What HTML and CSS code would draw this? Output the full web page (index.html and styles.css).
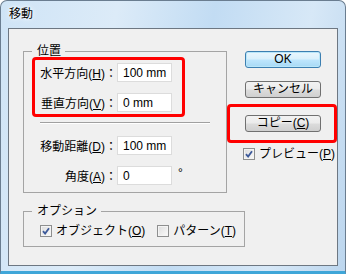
FILE: index.html
```html
<!DOCTYPE html>
<html lang="ja">
<head>
  <meta charset="UTF-8" />
  <title>移動</title>
  <link rel="stylesheet" href="styles.css">
</head>
<body>
  <div class="window">
    <div class="titlebar">移動</div>

    <div class="client">
      <div class="left">
        <fieldset class="group position">
          <legend>位置</legend>
          <div class="mark mark-fields">
            <div class="row">
              <label for="h">水平方向(<u>H</u>)：</label>
              <input id="h" class="field" type="text" value="100 mm">
            </div>
            <div class="row">
              <label for="v">垂直方向(<u>V</u>)：</label>
              <input id="v" class="field" type="text" value="0 mm">
            </div>
          </div>
          <div class="sep"></div>
          <div class="row indent">
            <label for="d">移動距離(<u>D</u>)：</label>
            <input id="d" class="field" type="text" value="100 mm">
          </div>
          <div class="row indent">
            <label for="a">角度(<u>A</u>)：</label>
            <input id="a" class="field" type="text" value="0">
            <span class="deg">°</span>
          </div>
        </fieldset>

        <fieldset class="group options">
          <legend>オプション</legend>
          <div class="checks">
            <label class="check"><span class="box checked"><svg viewBox="0 0 8 8"><path d="M1 4.2 L3.1 6.6 L7 1.2" /></svg></span><span>オブジェクト(<u>O</u>)</span></label>
            <label class="check"><span class="box"></span><span>パターン(<u>T</u>)</span></label>
          </div>
        </fieldset>
      </div>

      <div class="right">
        <button class="btn default">OK</button>
        <button class="btn">キャンセル</button>
        <div class="mark mark-btn">
          <button class="btn">コピー(<u>C</u>)</button>
        </div>
        <label class="check preview"><span class="box checked"><svg viewBox="0 0 8 8"><path d="M1 4.2 L3.1 6.6 L7 1.2" /></svg></span><span>プレビュー(<u>P</u>)</span></label>
      </div>
    </div>
  </div>
</body>
</html>
```

FILE: styles.css
```css
body {
  margin: 0;
  background: #ffffff;
  font-family: "Liberation Sans", "Noto Sans CJK JP", sans-serif;
  font-size: 12px;
  color: #000;
}

.window {
  width: 346px;
  height: 274px;
  box-sizing: border-box;
  padding: 0 7px 0 7px;
  border: 1px solid #6a7d90;
  border-bottom: 3px solid #3fa6d8;
  border-radius: 7px 7px 0 0;
  background: linear-gradient(100deg, #cfe4f6 0%, #dcebf8 30%, #c2dcf3 55%, #d7e8f7 80%, #bcd6ee 100%);
}

.titlebar {
  height: 27px;
  line-height: 14px;
  padding: 6px 0 0 1px;
  box-sizing: border-box;
  font-size: 12px;
  text-shadow: 0 0 6px #fff, 0 0 3px #fff;
}

.client {
  display: flex;
  height: 238px;
  box-sizing: border-box;
  border: 1px solid #6d7782;
  background: #f0f0f0;
}

.left {
  width: 217px;
  padding: 15px 0 0 14px;
  box-sizing: border-box;
}

.group {
  margin: 0;
  width: 203px;
  box-sizing: border-box;
  border: 1px solid #a4a4a4;
  padding: 0 8px 7px 8px;
}

.group legend {
  padding: 0 4px 0 5px;
  line-height: 14px;
}

.mark {
  border: 3px solid #f00;
  border-radius: 4px;
}

.mark-fields {
  width: 153px;
  box-sizing: border-box;
  margin-top: -1px;
  padding: 3px 0 2px 5px;
  display: flex;
  flex-direction: column;
  gap: 11px;
}

.row {
  display: flex;
  align-items: center;
  height: 19px;
}

.row label {
  width: 77px;
  text-align: right;
  white-space: nowrap;
}

.field {
  width: 55px;
  height: 19px;
  box-sizing: border-box;
  margin: 0;
  padding: 0 0 0 5px;
  border: 1px solid #dcdcdc;
  background: #fff;
  font-family: "Liberation Sans", sans-serif;
  font-size: 12px;
  color: #000;
}

.sep {
  margin: 5px 8px 0 8px;
  width: 170px;
  height: 1px;
  background: #a0a0a0;
  border-bottom: 1px solid #fff;
}

.indent {
  margin-left: 8px;
  margin-top: 12px;
}

.indent + .indent {
  margin-top: 11px;
}

.deg {
  margin: -5px 0 0 6px;
}

.options {
  margin-top: 11px;
  padding-bottom: 8px;
}

.checks {
  display: flex;
  gap: 12px;
  padding: 6px 0 0 8px;
}

.check {
  display: flex;
  align-items: center;
  gap: 4px;
  line-height: 14px;
  white-space: nowrap;
}

.box {
  width: 12px;
  height: 12px;
  box-sizing: border-box;
  border: 1px solid #8e8f8f;
  background: linear-gradient(135deg, #dcdcdc, #fbfbfb);
  box-shadow: inset 0 0 0 1px #f4f4f4;
  display: flex;
  align-items: center;
  justify-content: center;
}

.box svg {
  width: 8px;
  height: 8px;
}

.box path {
  fill: none;
  stroke: #3d5a9a;
  stroke-width: 1.8;
}

.right {
  width: 110px;
  margin-left: 1px;
  padding-top: 22px;
  display: flex;
  flex-direction: column;
  align-items: flex-start;
}

.btn {
  width: 76px;
  height: 17px;
  margin: 0 0 0 18px;
  padding: 0;
  border: 1px solid #707070;
  border-radius: 3px;
  background: linear-gradient(#f2f2f2 0%, #ebebeb 48%, #dcdcdc 52%, #cfcfcf 100%);
  font-family: "Liberation Sans", "Noto Sans CJK JP", sans-serif;
  font-size: 12px;
  line-height: 15px;
  color: #000;
}

.btn.default {
  border-color: #3c7fb1;
  background: linear-gradient(#eaf6fd 0%, #d9f0fc 48%, #bee6fd 52%, #a7d9f5 100%);
  box-shadow: inset 0 0 0 1px #b9e6f9;
}

.btn + .btn {
  margin-top: 13px;
}

.mark-btn {
  margin-top: 6px;
  width: 110px;
  box-sizing: border-box;
  padding: 8px 0 8px 15px;
}

.mark-btn .btn {
  margin-left: 0;
}

.preview {
  margin: 4px 0 0 16px;
}
```
